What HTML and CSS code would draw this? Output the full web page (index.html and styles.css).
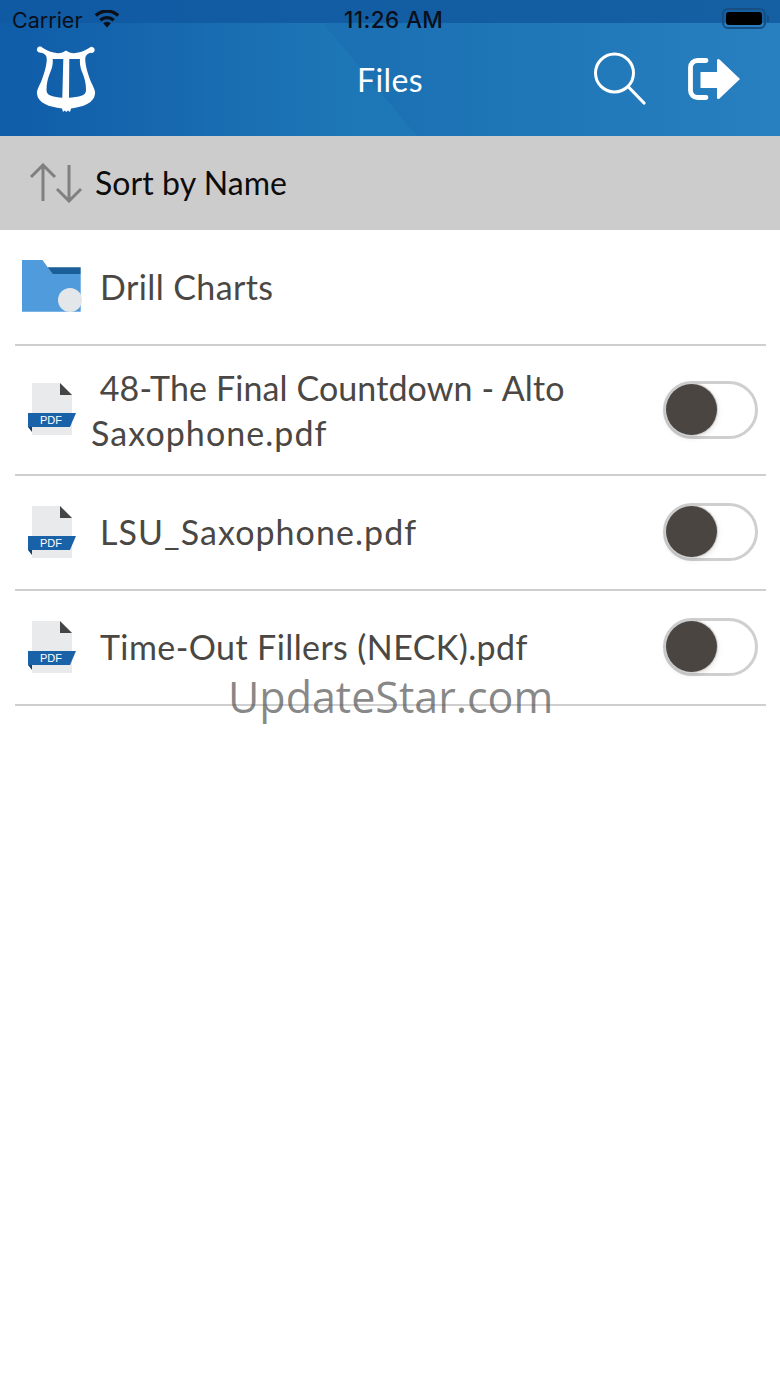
FILE: index.html
```html
<!DOCTYPE html>
<html lang="en">
<head>
<meta charset="utf-8">
<title>Files</title>
<link rel="stylesheet" href="styles.css">
</head>
<body>
<div class="page">
  <header class="header">
    <div class="status">
      <div class="status-left">
        <span>Carrier</span>
        <svg class="wifi" width="26" height="18" viewBox="0 0 26 18"><path d="M13 17.500l-3.800-4.300a5.400 5.400 0 0 1 7.600 0z" fill="#0a0f1a"/><path d="M6.300 10.300a9.800 9.800 0 0 1 13.400 0M1.800 5.600a16.200 16.200 0 0 1 22.400 0" fill="none" stroke="#0a0f1a" stroke-width="3.400"/></svg>
      </div>
      <span class="time">11:26 AM</span>
      <div class="battery"><span class="battery-fill"></span></div>
    </div>
    <nav class="nav">
      <svg class="lyre" width="60" height="68" viewBox="36 45 60 68"><path d="M37 49.300a3 3 0 0 1 5.500-1.500C47 50.500 52 53 58 53.200c3 0 6-1.200 8-2.700 2 1.500 5 2.700 8 2.700 6-.2 11-2.700 15.500-5.400a3 3 0 1 1 1.500 5c-3 .7-4.500 1.700-5.500 4.200-1 5 1.500 15 5.500 25 3 6 4.500 9 4 12-1 9-12 13-24 14.500l-1 3.500-2-1.500-1.700 1.500-1.800-1.500-1.500 1.500-1-3.500C49 107 38 103 37 94c-.5-3 1-6 4-12 4-10 6.500-20 5.500-25-1-2.500-2.500-3.500-5.500-4.200-2.700-.2-4.500-1.500-4-3.500zM52.700 59c.5 5-.7 9.500-2.700 14-2 5-3.500 10-3.500 17 0 3 1.500 4.500 4 5.500 4 1.500 7.500 2 11.800 2.300L63.300 59zM69.300 59L69 97.800c4.300-.3 9-.8 13-2.300 2.500-1 4-2.500 4-5.500 0-7-1.500-12-3.500-17-2-4.500-3-9-2.500-14z" fill="#fff" fill-rule="evenodd"/></svg>
      <h1 class="title">Files</h1>
      <div class="nav-actions">
        <svg width="54" height="54" viewBox="592 52 54 54"><circle cx="614.500" cy="73" r="19" fill="none" stroke="#fff" stroke-width="3"/><path d="M628.500 87L644 103" fill="none" stroke="#fff" stroke-width="3.200" stroke-linecap="round"/></svg>
        <svg width="54" height="46" viewBox="686 56 54 46"><path d="M706 60.500h-8.500a7 7 0 0 0-7 7v23a7 7 0 0 0 7 7H706" fill="none" stroke="#fff" stroke-width="4.800" stroke-linecap="round"/><path d="M700.500 72H717V60.500c0-1.500 1.500-2 2.500-1L740 79 719.500 98.500c-1 1-2.500.5-2.500-1V88h-16.500z" fill="#fff"/></svg>
      </div>
    </nav>
  </header>

  <div class="sortbar">
    <svg width="56" height="40" viewBox="0 0 56 40"><path d="M14 38V2M2 14L14 2l12 12M40 2v36M28 26l12 12 12-12" fill="none" stroke="#808080" stroke-width="3"/></svg>
    <span class="sort-label">Sort by Name</span>
  </div>

  <ul class="list">
    <li class="row row-folder">
      <svg class="folder" width="60" height="53" viewBox="0 0 60 53"><path d="M0 0h20.500l10 14h28.200v37.700H0z" fill="#509bdc"/><path d="M25.500 7.300h33.200V14H30.500z" fill="#1a5f98"/><circle cx="48" cy="40" r="12" fill="#e4e7e9"/></svg>
      <span class="name name-folder">Drill Charts</span>
    </li>
    <li class="row row-tall">
      <svg class="pdf" width="48" height="52" viewBox="0 0 48 52"><use href="#pdf-icon"/></svg>
      <span class="name name-two"><span class="tight">&nbsp;48-The Final Countdown - Alto</span><br><span class="wide">Saxophone.pdf</span></span>
      <div class="toggle"><span class="knob"></span></div>
    </li>
    <li class="row row-single">
      <svg class="pdf" width="48" height="52" viewBox="0 0 48 52"><use href="#pdf-icon"/></svg>
      <span class="name"><span class="wide">LSU_Saxophone.pdf</span></span>
      <div class="toggle"><span class="knob"></span></div>
    </li>
    <li class="row row-single">
      <svg class="pdf" width="48" height="52" viewBox="0 0 48 52"><use href="#pdf-icon"/></svg>
      <span class="name">Time-Out Fillers (NECK).pdf</span>
      <div class="toggle"><span class="knob"></span></div>
    </li>
  </ul>

  <div class="watermark">UpdateStar.com</div>

  <svg class="defs" width="0" height="0">
    <defs>
      <g id="pdf-icon">
        <path d="M4 0h28l12 11v41H4z" fill="#e8eaec"/>
        <path d="M32 0l12 12H32z" fill="#454545"/>
        <path d="M0 30h48l-6 14H0z" fill="#1a62a8"/>
        <path d="M0 44h4v5z" fill="#14406e"/>
        <text x="12" y="41" class="pdf-text">PDF</text>
      </g>
    </defs>
  </svg>
</div>
</body>
</html>
```

FILE: styles.css
```css
* { box-sizing: border-box; }
html, body { margin: 0; padding: 0; background: #fff; }
.page { position: relative; width: 780px; height: 1387px; overflow: hidden; font-family: "Lato", "Liberation Sans", sans-serif; }

.header { height: 136px; background: linear-gradient(90deg, #1b71b3 50%, #2880c0 100%); }
.status { height: 23px; padding: 8px 12px 0 12px; display: flex; align-items: flex-start; justify-content: space-between; background: linear-gradient(90deg, #0f5aa3, #1560a2); color: #0a0f1a; font-family: "Inter", "Liberation Sans", sans-serif; font-size: 21.500px; line-height: 24px; position: relative; z-index: 1; }
.status-left { display: flex; align-items: flex-start; gap: 12px; }
.status .time { position: absolute; left: 344px; top: 8px; white-space: nowrap; font-size: 22.500px; font-weight: 500; letter-spacing: .4px; }
.wifi { margin-top: 2px; }
.battery { width: 44px; height: 21px; border: 2px solid #174f85; border-radius: 6px; padding: 2px; position: relative; margin-right: 2px; }
.battery::after { content: ""; position: absolute; right: -5px; top: 5px; width: 2px; height: 7px; background: #174f85; border-radius: 0 2px 2px 0; }
.battery-fill { display: block; height: 100%; background: #000; border-radius: 3px; }

.nav { height: 113px; padding: 0 40px 0 36px; display: flex; align-items: center; position: relative; isolation: isolate; }
.nav::before { content: ""; position: absolute; inset: 0; z-index: -1; clip-path: polygon(0 0, 323px 0, 417px 100%, 0 100%); background: linear-gradient(90deg, #0f5ca8 0, #1667ae 150px, #1d76b6 340px, #1e77b7 420px); }
.lyre { margin-top: -1px; }
.title { position: absolute; left: 0; right: 0; top: 37px; margin: 0; text-align: center; color: #fff; font-size: 32px; font-weight: 400; line-height: 40px; letter-spacing: .4px; }
.nav-actions { margin-left: auto; display: flex; align-items: center; gap: 40px; margin-top: -1px; }

.sortbar { height: 94px; background: #cccccc; padding: 0 0 2px 29px; display: flex; align-items: center; gap: 10px; }
.sortbar svg { margin-top: 2px; }
.sort-label { font-size: 32px; color: #0c0c0c; letter-spacing: .07px; }

.list { list-style: none; margin: 0; padding: 0 14px 0 15px; }
.row { height: 115px; border-bottom: 2px solid #cfcfcf; display: flex; align-items: center; position: relative; padding-left: 13px; }
.row-tall { height: 130px; }
.row-tall .pdf { margin-top: -2px; }
.row-single { padding-bottom: 2px; }
.row-folder { height: 116px; padding-bottom: 2px; padding-left: 7px; }
.folder { flex: none; }
.pdf { flex: none; }
.pdf-text { font: 400 11px "Liberation Sans", sans-serif; fill: #fff; }
.name { margin-left: 24px; font-size: 34px; line-height: 45px; color: #4a4744; letter-spacing: .4px; white-space: nowrap; }
.tight { letter-spacing: .1px; }
.wide { letter-spacing: 1.05px; }
.name-folder { margin-left: 18px; }
.name-two { margin-left: 15px; }
.toggle { margin-left: auto; margin-right: 8px; flex: none; width: 95px; height: 58px; border: 3px solid #cfcfcf; border-radius: 29px; background: #fff; }
.knob { display: block; width: 51px; height: 51px; border-radius: 50%; background: #4a4541; box-shadow: 0 0 0 1px #cfcfcf, 0 2px 6px rgba(0, 0, 0, .14); }

.watermark { position: absolute; left: 228px; top: 669px; font-family: "Open Sans", sans-serif; font-size: 43px; line-height: 56px; color: rgba(90, 90, 90, .72); white-space: nowrap; }
.defs { position: absolute; }
```
